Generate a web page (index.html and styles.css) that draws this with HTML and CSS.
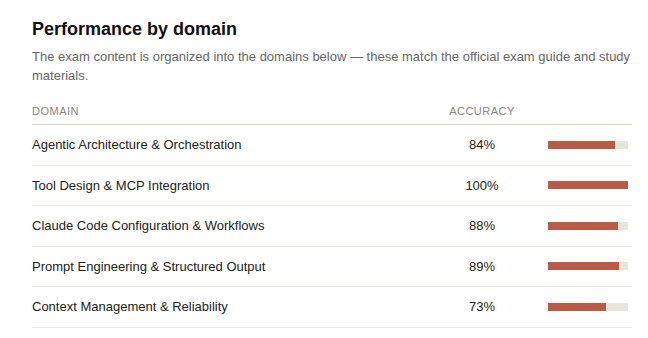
FILE: index.html
```html
<!DOCTYPE html>
<html>
<head>
<meta charset="utf-8">
<link rel="stylesheet" href="styles.css">
</head>
<body>
<section class="panel">
  <h2 class="title">Performance by domain</h2>
  <p class="desc">The exam content is organized into the domains below — these match the official exam guide and study materials.</p>
  <div class="table">
    <div class="row head">
      <div class="c-name">Domain</div>
      <div class="c-acc">Accuracy</div>
      <div class="c-bar"></div>
    </div>
    <div class="row">
      <div class="c-name">Agentic Architecture &amp; Orchestration</div>
      <div class="c-acc">84%</div>
      <div class="c-bar"><div class="track"><div class="fill" style="width:84%"></div></div></div>
    </div>
    <div class="row">
      <div class="c-name">Tool Design &amp; MCP Integration</div>
      <div class="c-acc">100%</div>
      <div class="c-bar"><div class="track"><div class="fill" style="width:100%"></div></div></div>
    </div>
    <div class="row">
      <div class="c-name">Claude Code Configuration &amp; Workflows</div>
      <div class="c-acc">88%</div>
      <div class="c-bar"><div class="track"><div class="fill" style="width:88%"></div></div></div>
    </div>
    <div class="row">
      <div class="c-name">Prompt Engineering &amp; Structured Output</div>
      <div class="c-acc">89%</div>
      <div class="c-bar"><div class="track"><div class="fill" style="width:89%"></div></div></div>
    </div>
    <div class="row">
      <div class="c-name">Context Management &amp; Reliability</div>
      <div class="c-acc">73%</div>
      <div class="c-bar"><div class="track"><div class="fill" style="width:73%"></div></div></div>
    </div>
  </div>
</section>
</body>
</html>
```

FILE: styles.css
```css
html, body {
  margin: 0;
  padding: 0;
  background: #ffffff;
}
body {
  font-family: "Liberation Sans", Arial, sans-serif;
  color: #1a1a1a;
}
.panel {
  padding: 18px 16px 0 32px;
}
.title {
  margin: 0;
  font-size: 18px;
  font-weight: bold;
  line-height: 22px;
  color: #111;
}
.desc {
  margin: 7px 0 0 0;
  font-size: 13px;
  line-height: 19px;
  color: #666;
}
.table {
  margin-top: 20px;
}
.row {
  display: grid;
  grid-template-columns: 1fr 100px 100px;
  align-items: center;
  height: 39.5px;
  border-bottom: 1px solid #eceae4;
  font-size: 13px;
  color: #222;
}
.row.head {
  height: 19px;
  align-items: start;
  border-bottom: 1px solid #d6d2c4;
  font-size: 11px;
  letter-spacing: 0.5px;
  text-transform: uppercase;
  color: #8a8680;
}
.c-acc {
  text-align: center;
}
.c-bar {
  padding: 0 4px 0 16px;
}
.track {
  height: 8px;
  background: #e8e5dd;
}
.fill {
  height: 100%;
  background: #b95c47;
}
```
